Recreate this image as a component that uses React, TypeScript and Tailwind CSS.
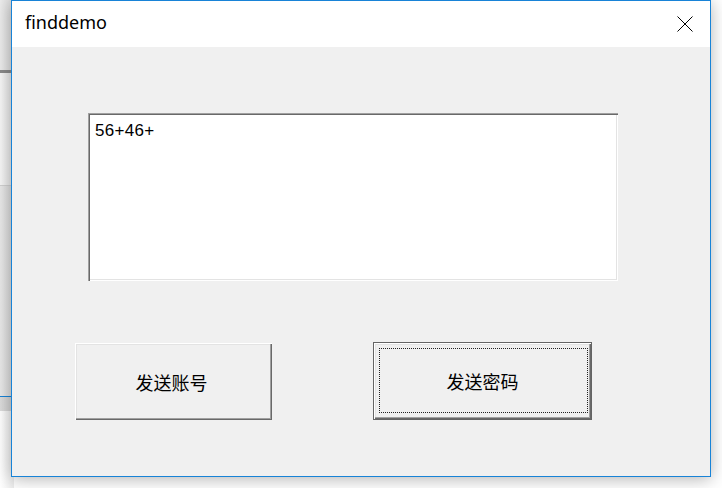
import React from "react";

export default function App() {
  return (
    <div className="relative w-[722px] h-[488px] overflow-hidden bg-white">
      {/* Background windows peeking out on the left */}
      <div className="absolute left-0 top-0 w-[14px] h-[488px] flex flex-col">
        <div className="h-[70px] bg-gradient-to-r from-[#ececec] to-[#dadada]" />
        <div className="h-[3px] bg-[#8a8a8a]" />
        <div className="h-[112px] bg-gradient-to-r from-[#f7f7f7] to-[#e4e4e4]" />
        <div className="h-[1px] bg-[#d0d0d0]" />
        <div className="h-[210px] bg-gradient-to-r from-[#e9e9e9] to-[#d8d8d8]" />
        <div className="h-[1px] bg-[#1883d7]" />
        <div className="h-[14px] bg-gradient-to-r from-[#dcdcdc] to-[#cfcfcf]" />
        <div className="flex-1 bg-gradient-to-r from-white to-[#ececec]" />
      </div>

      {/* Main window */}
      <div
        className="absolute left-[11px] top-0 w-[700px] h-[477px] border border-[#1883d7] bg-[#f0f0f0] flex flex-col shadow-[0_2px_16px_rgba(0,0,0,0.3)]"
      >
        {/* Title bar */}
        <div className="h-[46px] bg-white flex items-start justify-between shrink-0">
          <span
            className="ml-[13px] mt-[9px] text-[18px] leading-[24px] text-black"
            style={{ fontFamily: '"Noto Sans", "Open Sans", sans-serif' }}
          >
            finddemo
          </span>
          <svg
            className="mt-[15px] mr-[17px]"
            width="16"
            height="16"
            viewBox="0 0 16 16"
          >
            <path d="M0.5 0.5 L15.5 15.5 M15.5 0.5 L0.5 15.5" stroke="#000" strokeWidth="1" fill="none" />
          </svg>
        </div>

        {/* Client area */}
        <div className="flex-1 flex flex-col pl-[63px] pt-[66px]">
          <div
            className="ml-[13px] w-[530px] h-[168px] bg-white shadow-[inset_1px_1px_0_#a0a0a0,inset_2px_2px_0_#696969,inset_-1px_-1px_0_#ffffff,inset_-2px_-2px_0_#e3e3e3] pl-[7px] pt-[5px]"
          >
            <span
              className="text-[17px] leading-[20px] text-black tracking-[0.3px]"
              style={{ fontFamily: '"Liberation Sans", Arial, sans-serif' }}
            >
              56+46+
            </span>
          </div>

          <div className="flex items-start mt-[61px]">
            <div
              className="mt-[1px] w-[197px] h-[77px] bg-[#f0f0f0] flex items-center justify-center shadow-[inset_1px_1px_0_#ffffff,inset_-1px_-1px_0_#696969,inset_-2px_-2px_0_#a0a0a0,inset_2px_2px_0_#e3e3e3]"
            >
              <span
                className="text-[18px] leading-[20px] text-black -ml-[4px]"
                style={{ fontFamily: '"Noto Sans CJK SC", "Noto Sans", sans-serif' }}
              >
                发送账号
              </span>
            </div>

            <div className="ml-[101px] w-[219px] h-[78px] border border-[#646464] bg-[#f0f0f0] relative flex items-center justify-center shadow-[inset_1px_1px_0_#ffffff,inset_-1px_-1px_0_#696969,inset_-2px_-2px_0_#a0a0a0,inset_2px_2px_0_#e3e3e3]">
              <div className="absolute left-[5px] top-[5px] right-[3px] bottom-[6px] border border-dotted border-[#222]" />
              <span
                className="text-[18px] leading-[20px] text-black"
                style={{ fontFamily: '"Noto Sans CJK SC", "Noto Sans", sans-serif' }}
              >
                发送密码
              </span>
            </div>
          </div>
        </div>
      </div>
    </div>
  );
}
